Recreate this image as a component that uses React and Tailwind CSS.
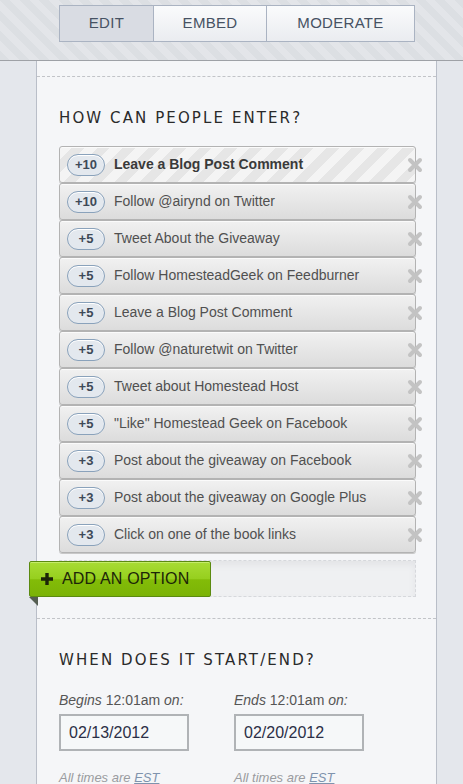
import { useState } from 'react';

const options = [
  { pts: '+10', label: 'Leave a Blog Post Comment' },
  { pts: '+10', label: 'Follow @airynd on Twitter' },
  { pts: '+5', label: 'Tweet About the Giveaway' },
  { pts: '+5', label: 'Follow HomesteadGeek on Feedburner' },
  { pts: '+5', label: 'Leave a Blog Post Comment' },
  { pts: '+5', label: 'Follow @naturetwit on Twitter' },
  { pts: '+5', label: 'Tweet about Homestead Host' },
  { pts: '+5', label: '"Like" Homestead Geek on Facebook' },
  { pts: '+3', label: 'Post about the giveaway on Facebook' },
  { pts: '+3', label: 'Post about the giveaway on Google Plus' },
  { pts: '+3', label: 'Click on one of the book links' },
];

function RemoveIcon() {
  return (
    <svg width="16" height="16" viewBox="0 0 16 16" className="absolute right-[-8px] top-[10px]">
      <path d="M3 3 L13 13 M13 3 L3 13" stroke="#c3c3c3" strokeWidth="4" strokeLinecap="round" />
    </svg>
  );
}

function OptionRow({ pts, label, active }) {
  return (
    <div
      className={`relative h-[37px] flex items-center rounded-[3px] border border-[#b3b3b3] shadow-[inset_0_1px_0_#fbfbfb,0_1px_0_#c8c8c8] ${
        active
          ? 'bg-[repeating-linear-gradient(135deg,#f4f4f4_0px,#f4f4f4_9px,#e6e6e6_9px,#e6e6e6_18px)]'
          : 'bg-[linear-gradient(#f1f1f1,#dcdcdc)]'
      }`}
    >
      <span className="ml-[7px] w-[38px] h-[22px] flex items-center justify-center rounded-full border border-[#8aa2bb] bg-[#e3e8ee] text-[13px] font-bold text-[#3e4a58] shadow-[inset_0_1px_0_#fff]">
        {pts}
      </span>
      <span className={`ml-[9px] text-[14px] ${active ? 'font-bold text-[#3a3a3a]' : 'text-[#505050]'}`}>{label}</span>
      <RemoveIcon />
    </div>
  );
}

export default function App() {
  const [tab, setTab] = useState('EDIT');
  const font = { fontFamily: '"Liberation Sans", Arial, sans-serif' };
  const head = 'font-["DejaVu_Sans",sans-serif] text-[15px] tracking-[0.14em] text-[#2a2a2a] leading-[20px]';

  return (
    <div className="w-[463px] h-[784px] overflow-hidden bg-[#e4e7ec]" style={font}>
      {/* tab bar */}
      <div className="h-[61px] border-b border-[#9ea1a6] pt-[5px] pl-[59px] bg-[repeating-linear-gradient(45deg,#dcdfe3_0px,#dcdfe3_7px,#e3e5e9_7px,#e3e5e9_14px)]">
        <div className="flex h-[37px] w-[356px] border border-[#aab3c2]">
          {[
            ['EDIT', 'w-[93px]'],
            ['EMBED', 'w-[113px]'],
            ['MODERATE', 'flex-1'],
          ].map(([t, w], i) => (
            <button
              key={t}
              onClick={() => setTab(t)}
              className={`${w} h-full flex items-center justify-center text-[15px] tracking-[0.02em] text-[#465263] ${
                i > 0 ? 'border-l border-[#aab3c2]' : ''
              } ${tab === t ? 'bg-[#d9dce3]' : 'bg-[linear-gradient(#fafbfc,#eaecf0)]'}`}
            >
              {t}
            </button>
          ))}
        </div>
      </div>

      {/* panel */}
      <div className="ml-[36px] w-[401px] h-[723px] border-l border-r border-[#b9bec8] bg-[#f5f6f8]">
        <div className="h-[16px] border-b border-dashed border-[#c2c4c8]" />
        <div className="pl-[22px] pr-[21px]">
          <h2 className={`${head} pt-[31px]`}>HOW CAN PEOPLE ENTER?</h2>
          <div className="mt-[18px] w-[357px]">
            {options.map((o, i) => (
              <OptionRow key={i} {...o} active={i === 0} />
            ))}
          </div>

          <div className="relative mt-[7px] w-[357px] h-[37px] border border-dashed border-[#d6d8dc] bg-[#eff0f2] shadow-[inset_0_4px_6px_#e3e4e7]">
            <button className="absolute left-[-31px] top-[0px] w-[182px] h-[36px] flex items-center gap-[9px] pl-[11px] rounded-[2px] border border-[#5b8a10] bg-[linear-gradient(#a8dc34_0%,#96cf1e_50%,#83bc08_52%,#7bb306_100%)] text-[16px] tracking-[0.01em] text-[#1c2508] shadow-[inset_0_1px_0_#c5ec6a]">
              <svg width="12" height="12" viewBox="0 0 12 12">
                <path d="M6 0 V12 M0 6 H12" stroke="#1c2508" strokeWidth="3.4" />
              </svg>
              ADD AN OPTION
            </button>
            <div className="absolute left-[-31px] top-[36px] w-0 h-0 border-t-[9px] border-t-[#555e52] border-l-[9px] border-l-transparent" />
          </div>
        </div>

        <div className="mt-[21px] border-b border-dashed border-[#c2c4c8]" />

        <div className="pl-[22px]">
          <h2 className={`${head} pt-[31px]`}>WHEN DOES IT START/END?</h2>
          <div className="flex gap-[45px] mt-[21px]">
            {[
              ['Begins', '02/13/2012'],
              ['Ends', '02/20/2012'],
            ].map(([w, d]) => (
              <div key={w} className="w-[130px]">
                <div className="text-[14px] text-[#555] leading-[18px] whitespace-nowrap">
                  <i>{w}</i> 12:01am <i>on:</i>
                </div>
                <input
                  defaultValue={d}
                  className="mt-[5px] w-[130px] h-[37px] border-2 border-[#b0b3b6] bg-[#f6f8f9] pl-[8px] text-[16px] text-[#2b2f46] outline-none"
                />
                <div className="mt-[17px] text-[13px] italic text-[#9a9ca0] whitespace-nowrap">
                  All times are <span className="underline text-[#7f93ad]">EST</span>
                </div>
              </div>
            ))}
          </div>
        </div>
      </div>
    </div>
  );
}
